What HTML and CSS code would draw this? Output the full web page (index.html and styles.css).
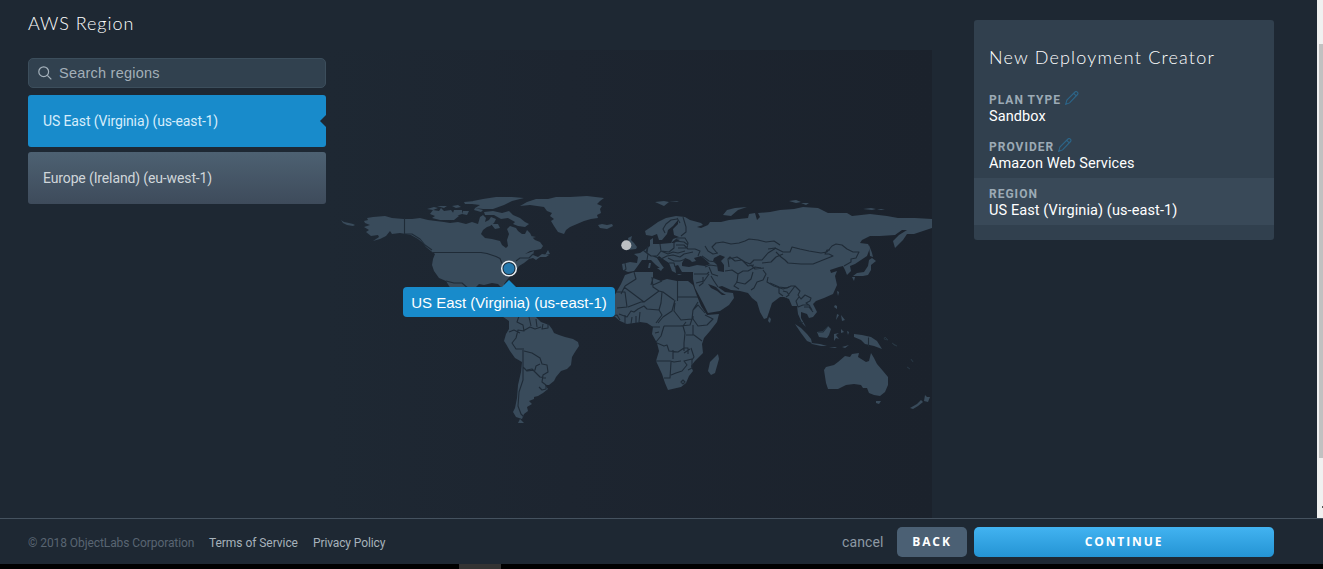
FILE: index.html
```html
<!DOCTYPE html>
<html lang="en">
<head>
<meta charset="utf-8">
<title>New Deployment Creator</title>
<link rel="stylesheet" href="styles.css">
</head>
<body>
<div class="viewport">
  <main class="content">
    <section class="regions">
      <h1 class="title">AWS Region</h1>
      <div class="search">
        <svg class="search-icon" width="14" height="14" viewBox="0 0 14 14"><circle cx="5.7" cy="5.7" r="4.9"/><path d="M9.3 9.3l4 4"/></svg>
        <span class="search-text">Search regions</span>
      </div>
      <div class="option selected">US East (Virginia) (us-east-1)</div>
      <div class="option">Europe (Ireland) (eu-west-1)</div>
    </section>
    <section class="map">
      <svg class="world" viewBox="326 50 606 468" width="606" height="468">
        <g class="land">
          <!-- Aleutians, Alaska, Canada, United States, Mexico -->
          <path d="M341 220l3 2 5 1 4 1 2 1-2 1-6-1-4-2z"/>
          <path d="M364 221L368 220 367 218 373 217 385 216 392 218 404 219 412 219 420 218 428 220 436 221 444 222 450 223 458 222 466 224 472 222 478 224 480 217 483 215 486 218 485 222 489 220 491 217 496 219 494 223 490 226 487 227 483 230 481 234 485 238 492 239 500 241 502 245 506 248 508 246 507 240 509 234 507 229 510 226 516 228 518 231 522 234 525 234 527 230 530 233 532 237 535 240 540 242 543 246 541 249 536 250 530 251 525 254 534 251 533 255 538 257 542 254 549 255 546 257 540 257 536 260 533 258 529 259 524 263 519 266 517 269 512 274 507 280 504 284 507 291 501 287 498 284 492 283 484 285 479 284 475 288 472 300 460 300 453 291 449 286 446 281 439 278 434 271 432 265 433 259 435 254 431 251 426 247 423 243 418 239 411 235 406 234 400 233 392 234 390 231 386 236 380 239 373 241 379 237 378 235 371 236 366 232 369 230 364 227 370 225 365 223z"/>
          <path d="M430 214l3-4 6 1 2-3 3 3 7-1 3 4 5 2-5 4-9 0-5 0-8-2 3-2z M427 209l7-2 4 1-5 2z M437 206l10 0-3 2z M452 206l6-1 3 2-5 1z M454 210l8 0 0 4-6 2-3-3z M463 211l6 0-2 4-5-1z M475 208l8 2-2 2-7-2z M464 202l11-1-3 3-7 0z M473 201l10-2 13-2 16 0 12 1-12 3-8 4-11 4-10 0-8-1 5-3-8-1z M484 212l9-1 9 2 7-2 4 4 7 3 5 4 4 2-4 3-7-1-5-2 2-2-7-4-7 1-7-4-9 0z M491 224l7 0 2 4-5 1z M531 236l5 1-4 1z M548 250l2 4-5 1z"/>
          <path d="M520 206L527 202 536 199 548 199 556 197 570 197 587 196 604 198 600 201 597 204 602 206 600 209 601 213 597 215 598 218 591 219 584 221 577 224 570 227 566 230 564 234 558 232 554 226 551 221 554 219 550 216 552 213 547 211 544 207 537 206 530 205z M598 225l4-1 5 1 5-1 1 2-6 3-7-1z"/>
          <!-- Central and South America -->
          <path d="M490 308L502 312 507 317 512 316 520 316 530 316 536 317 541 322 549 325 552 329 554 333 559 335 565 337 573 339 578 342 579 346 575 352 572 357 571 365 567 369 561 371 556 377 554 381 549 385 545 385 548 389 543 393 538 396 534 397 534 399 529 401 532 404 527 407 528 411 524 414 522 419 516 417 513 412 515 408 517 398 518 385 521 372 522 362 515 358 510 351 506 344 504 341 506 334 509 329 509 321z M520 419l4 4-6 0z"/>
          <!-- Eurasia -->
          <path d="M622 264L630 262 637 263 638 257 634 254 640 253 646 249 650 246 650 240 653 238 653 244 660 244 671 243 673 239 679 237 674 235 673 229 678 224 678 220 673 226 668 230 667 234 662 240 659 240 657 234 652 236 646 235 645 231 651 227 658 222 666 218 676 216 685 217 690 220 701 223 703 225 697 227 701 228 708 225 710 222 721 222 729 220 739 219 748 218 749 214 755 213 757 220 760 217 758 213 770 212 780 210 794 209 803 207 818 208 822 210 828 213 847 213 852 216 870 214 887 216 898 218 915 218 932 219 932 228 926 230 914 234 907 234 903 240 895 248 893 241 899 235 907 230 902 230 895 235 880 236 870 236 862 240 860 243 868 244 870 248 867 256 861 260 855 264 850 266 851 271 847 275 845 270 843 266 839 267 830 270 831 273 837 271 835 276 837 285 833 294 824 298 816 301 813 304 817 312 813 317 809 318 807 314 801 312 801 318 806 327 802 323 798 314 797 306 792 306 789 299 784 297 780 297 772 303 770 309 767 318 764 319 760 312 757 302 752 298 748 293 740 291 731 290 722 286 718 287 725 292 733 293 734 298 729 305 720 311 708 313 703 303 695 288 693 279 693 272 682 272 678 265 675 266 676 273 672 271 669 263 663 259 659 256 657 258 661 264 664 268 661 269 656 265 651 260 646 260 642 260 637 267 634 271 628 272 623 270z"/>
          <path d="M628 238l4-2-1 4 3 3 3 4-1 2-9 1 3-4z M621 245l4-3 2 4-4 3z M655 202l9-1 5 1-5 4z M669 202l10-1-2 1z M723 215l4-5 8-2 12-1-9 3-7 6z M789 201l7-1 5 2-5 1z M801 203l8 0-3 2z M863 209l8-1 5 1-4 1z M877 209l8 0-4 1z M657 268l6 0-2 3z M649 263l2 0-1 5-2 0z M677 274l5 0-3 1z M694 274l4-1-2 2z"/>
          <path d="M869 245l3 8 1 4-3-1z M869 260l3-2 4 3-5 4 0 5-3 5-5 1-5 0-5 0 4-3 7-1 4-6z M852 277l3 0-1 4z M837 291l2 1-1 4z M769 317l2 2-1 4-2-2z"/>
          <!-- Africa and Madagascar -->
          <path d="M625 275L634 272 648 272 653 272 653 278 661 281 667 279 677 281 688 281 693 285 697 296 701 306 707 315 719 314 717 322 710 331 704 338 702 344 703 353 695 361 691 366 693 371 689 376 686 383 681 387 668 390 665 383 662 374 656 361 659 351 657 343 652 334 653 327 647 323 640 322 634 323 627 324 620 321 614 316 612 310 612 300 617 291 621 284z"/>
          <path d="M718 354l1 5-4 14-4 2-3-4 2-9z"/>
          <!-- South-East Asia and Oceania -->
          <path d="M795 324l6 4 6 6 4 5 1 4-5-2-6-8z M811 343l9 1 7 2-6 0-9-2z M817 332l6-1 5-5 3 3-2 6-2 3-8-1z M834 334l5-1-3 2 3 4-3-1-2 3z M837 314l2 1-3 5z M841 315l4 5-3 1z M835 305l2 1 0 3-3-2z M841 329l3 3-3 1z M847 331l2 1-1 3z M829 347l8 0-2 1z M842 347l7-2-4 3z M854 334l8 1 9 2 6 4 5 8-8-3-9-2-4-4-7-3z"/>
          <path class="faint" d="M885 337l3 3-4-1z M892 343l5 3-3-1z M911 359l2 3z M907 367l3 2z"/>
          <path d="M824 370L826 367 834 365 838 362 845 356 850 357 852 354 859 353 858 357 866 362 869 361 871 353 874 358 877 364 883 371 888 377 888 385 885 392 880 396 874 395 869 393 867 388 863 388 861 385 854 384 846 385 838 389 828 389 826 383z M876 401l5 0-2 3-3-1z M925 395l2 2 3 0-2 5-4-1z M921 400l2 2-5 4-5 3-3-1 7-4z"/>
        </g>
        <g class="sea">
          <path d="M682 263l3-5 5 2 2 2 4-1-2-3 7-2 6 5 3 3-5 2-8-1-8 2-7-1z"/>
          <path d="M714 258l6-3 5 2-4 4 3 4 0 7-6-1-1-6-4-4z"/>
          <path d="M708 284l3 4 6 3 5 4 4 0-5-3-5-5-5-2z M671 243l5-4 4 1-6 3z"/>
        </g>
        <g class="borders">
          <path d="M404.500 218v16 M404 234l8 0 8 5 5 6 7 5 M433 252.500h48l6 1 9 3 4 2 2 5 M516 261l4-3h9l4-4 M446 281l8 2 8 0 8 7"/>
          <path d="M519 316l-2 6 6 3 1 6-6-1-2 8-4 5 4 6 8 0 M509 332l5-2 6 3 M524 351l8 2 8 5 2 6 5 1 1 7-5 3-1 7 4 3 0 4-4 1-3-3 M523 331l7-4 5 2 6-2 M529 317l2 9 M536 319l1 8 M543 324l-1 5 6-1 0-5 M523 350v17l4 4 8-1 1-4 4-2 M523 367v13l-4 12-1 14 3 8 3 3 M527 370l5-1 8 8 6 1"/>
          <path d="M665 233l-2-4 3-5 5-4 6-1 M677 218l3 5 M683 217l3 10 0 5-5 4 M648 246l-2 6 M643 250l5 4 -1 6 M660 244l1 7 8 1 5-4 0-6 M648 246l-1 7 4 3 6 0 4-5 M653 256l8 3 6-3 6-1 7 2 4-3 9-2 M661 251l7 3 5-2 5 1 7-2 M668 258l6 3 6 0 6-2 M669 263l5 0 1 4 M676 245l8 0 4 4 7 0 5 2-2 5 M675 241l9 1 4 3 M676 238l9 0 3 5-1 5-9 0 M625 263l1 6-2 2"/>
          <path d="M702 256l7 5 7 1 M705 267l5-2 7 1 M709 267l3 7 6 2 M709 272l-2 2-13 0 M711 276l3 5 4 6 M696 283l8-2 5-7 M703 277l0 6-4 3 M705 246l3 5 5 3 5-1 M717 253l-5-6 4-4 7-1 8 2 8-1 6-2 4-2 9 1 8 2 8-1 6 4 M729 267l-1-8 2-2 5 4 7-1 6 6 6-1 M729 259l8-2 8 5 5 2 4-4 8 0 6-7 8-5 M725 271l7-1 6 4 5-3 5 0 7-4 6 1 M738 274l-1 8-3 4 5 3 M736 282l9 2 6-5 2-7 M751 265l4 4 9-1 M763 270l3 4-3 6-6 2-3 6-3 2 M768 277l-1 5 7 4 9 3 6-2"/>
          <path d="M768 249l7-1 8 4 7 0 2-5 8 2 9 2 12 2 6-1 5-6 4-2 6 1 5 4 6 3 6 0-3 6-5 1 0 3-7 4 M776 252l5 5 4 3 3 3 13 1 12 0 10-4 10-4-4-2-4 0 2-4 3 0 M762 263l9-1 5-5 7-3 M770 283l9 4 8 1 4-2 4 0 5 5-2 4 3 4 4-4 6 3-1 3-4 2 4 3 M779 287l0 6 4 3 M783 291l4 1 2 3-3 2 M795 286l-6 8 M799 297l-3 4 2 6 5-2 6 0 3 5 M804 307l5 0 4 5 M799 321l4 2 M818 332l5 0 5-6 M868.500 337.500v9"/>
          <path d="M634 272l2 7-11 7 M625 286l-4 8 M624 287l20 15 15-11-6-4-1-10 M653 278l-2 7 M653 285l9-4 M677.500 281v20 M677 297h21 M659 291l4 1 11 8 M616 292l9 0 2 15-10 1 M628 307l13-5 3 0 M662 292l-1 11-2 7-12-1-3-3-6 3-4 3-3-1-4 6-8-3 M625 315v8 M632 317l-1 7 M636 316v7 M640 312l-1 10 M659 310l3 5-6 8 M675 300l-3 11-9 6-5 6 M675 303l-1 8 7 9 11-1 1-9 5-8 M693 310l5-5 7 8 M693 316l0 3 5 7 9-1 6-6-8-4 M692 319l-2 6-10 1 M664 326l19 0 3-4 M664 326l-3 10-5 6 M683 326l2 7-1 10 0 8 M686 335l8 0 8 6 M693 325v10 M657 343l7 3 3-1 2 6 9 1 6-4 4 0 0 6 M656 361l14 0 4 1 7-1 M673 350v9 M671 362l-1 16-6 0 M671 375l5-2 6-2 5-6-3-4 8-2 0 9-4 2 M684 353l6-4 M691 348l3 9-2 3 M683 380l2 2-2 2-2-2z M655 333l4-1 M650 327h10 M612 316l5-1 3 5"/>
        </g>
        <g class="pins"><circle class="pin-idle" cx="626.300" cy="245.300" r="5"/><circle class="pin-ring" cx="509" cy="268.500" r="7.300"/><circle class="pin-active" cx="509" cy="268.500" r="5.500"/></g>
      </svg>
      <div class="tooltip">US East (Virginia) (us-east-1)</div>
    </section>
    <aside class="summary">
      <h2 class="summary-title">New Deployment Creator</h2>
      <div class="entry"><div class="label">PLAN TYPE <svg class="pencil" width="14" height="14" viewBox="0 0 14 14"><path d="M.7 13.300l1.200-4.200L10 1c.8-.8 1.600-.5 2.300.2s1 1.500.2 2.300L4.600 11.900zM8.700 2.300l2.600 2.600"/></svg></div><div class="value">Sandbox</div></div>
      <div class="entry"><div class="label">PROVIDER <svg class="pencil" width="14" height="14" viewBox="0 0 14 14"><path d="M.7 13.300l1.200-4.200L10 1c.8-.8 1.600-.5 2.300.2s1 1.500.2 2.300L4.600 11.900zM8.700 2.300l2.600 2.600"/></svg></div><div class="value">Amazon Web Services</div></div>
      <div class="entry current"><div class="label">REGION</div><div class="value">US East (Virginia) (us-east-1)</div></div>
    </aside>
  </main>
  <div class="scrollbar"><div class="thumb"></div><div class="arrow"></div></div>
</div>
<footer class="footer">
  <span class="copyright">© 2018 ObjectLabs Corporation</span>
  <a class="link terms">Terms of Service</a>
  <a class="link privacy">Privacy Policy</a>
  <a class="cancel">cancel</a>
  <div class="button back">BACK</div>
  <div class="button continue">CONTINUE</div>
</footer>
<div class="taskbar"><div class="task"></div></div>
</body>
</html>
```
FILE: styles.css
```css
* { box-sizing: border-box; }
body { margin: 0; width: 1323px; height: 569px; overflow: hidden; background: #1e2833; font-family: Roboto, sans-serif; color: #fff; }
.viewport { display: flex; height: 518px; }
.content { display: flex; width: 1317px; padding-left: 28px; }
.regions { width: 298px; padding-top: 11px; }
.title, .summary-title { margin: 0; font: 300 18px/24px Lato, sans-serif; }
.title { letter-spacing: .95px; height: 47px; }
.search { display: flex; align-items: center; gap: 7px; height: 30px; padding-left: 9px; margin-bottom: 7px; border: 1px solid #3c4e5c; border-radius: 5px; background: #31414f; }
.search-icon { fill: none; stroke: #a5b1bb; stroke-width: 1.200; }
.search-text { font: 14.500px "Liberation Sans", sans-serif; letter-spacing: .23px; color: #a3afb8; }
.option { height: 52px; line-height: 52px; padding-left: 15px; margin-bottom: 5px; border-radius: 3px; font-size: 14px; letter-spacing: -.13px; color: #d0d6da; background: linear-gradient(#4d6172, #3e4b5b); }
.option.selected { position: relative; color: #d6edfb; background: #188bcb; }
.option.selected::after { content: ""; position: absolute; right: 0; top: 20px; border: 6px solid transparent; border-left: 0; border-right-color: #1e2833; }
.map { position: relative; width: 606px; height: 468px; margin-top: 50px; background: linear-gradient(90deg, #1e2833, #1d2530 40%, #1b222c); }
.world { display: block; }
.land { fill: #394b5b; }
.faint { fill: none; stroke: #263440; }
.sea { fill: #1d2530; }
.borders { fill: none; stroke: #1f2b37; stroke-width: 1.100; stroke-linejoin: round; }
.pin-idle { fill: #bcbfc2; }
.pin-ring { fill: #182b3b; stroke: #e8edf1; stroke-width: 1.500; }
.pin-active { fill: #2579ae; }
.tooltip { position: absolute; left: 77px; top: 237px; width: 212px; height: 30px; border-radius: 4px; background: #188bcb; font: 15px/31px "Liberation Sans", sans-serif; text-align: center; white-space: nowrap; }
.tooltip::before { content: ""; position: absolute; left: 99px; top: -7px; border: 7px solid transparent; border-top: 0; border-bottom-color: #188bcb; }
.summary { width: 300px; height: 220px; margin: 20px 0 0 42px; padding-top: 25px; border-radius: 3px; background: #31404e; }
.summary-title { height: 39px; padding-left: 15px; letter-spacing: 1.190px; }
.entry { height: 47px; padding: 8px 15px 0; }
.entry.current { background: #394958; }
.label { display: flex; align-items: center; gap: 4px; height: 16px; font-size: 12px; font-weight: 700; letter-spacing: 1px; color: #9caab5; }
.pencil { margin-top: -5px; fill: none; stroke: #2c6589; stroke-width: 1.100; }
.value { padding-top: 1px; font-size: 14.500px; line-height: 16px; letter-spacing: .1px; }
.scrollbar { width: 6px; background: #f0f0f0; padding: 44px 0 0 2px; }
.thumb { height: 414px; background: #c1c1c1; }
.arrow { width: 1px; height: 2px; margin: 48px 0 0 3px; background: #555; }
.footer { display: flex; align-items: center; height: 46px; padding: 0 0 0 28px; border-top: 1px solid #45525f; font-size: 12px; color: #a6b2bb; }
.copyright { width: 181px; margin-top: 3px; letter-spacing: -.08px; color: #596572; }
.link { margin-top: 3px; letter-spacing: -.05px; }
.terms { width: 104px; }
.privacy { width: 529px; letter-spacing: -.12px; }
.cancel { width: 55px; font-size: 14px; letter-spacing: .1px; color: #8d99a4; }
.button { height: 30px; border-radius: 5px; text-align: center; color: #fff; font: 700 12px/30px "Open Sans", sans-serif; letter-spacing: 1.900px; }
.back { width: 70px; margin-right: 7px; background: #4b6074; }
.continue { width: 300px; background: linear-gradient(#42b3f1, #2494d4); }
.taskbar { height: 5px; padding-left: 459px; background: #000; }
.task { width: 42px; height: 5px; background: #333; }
```
